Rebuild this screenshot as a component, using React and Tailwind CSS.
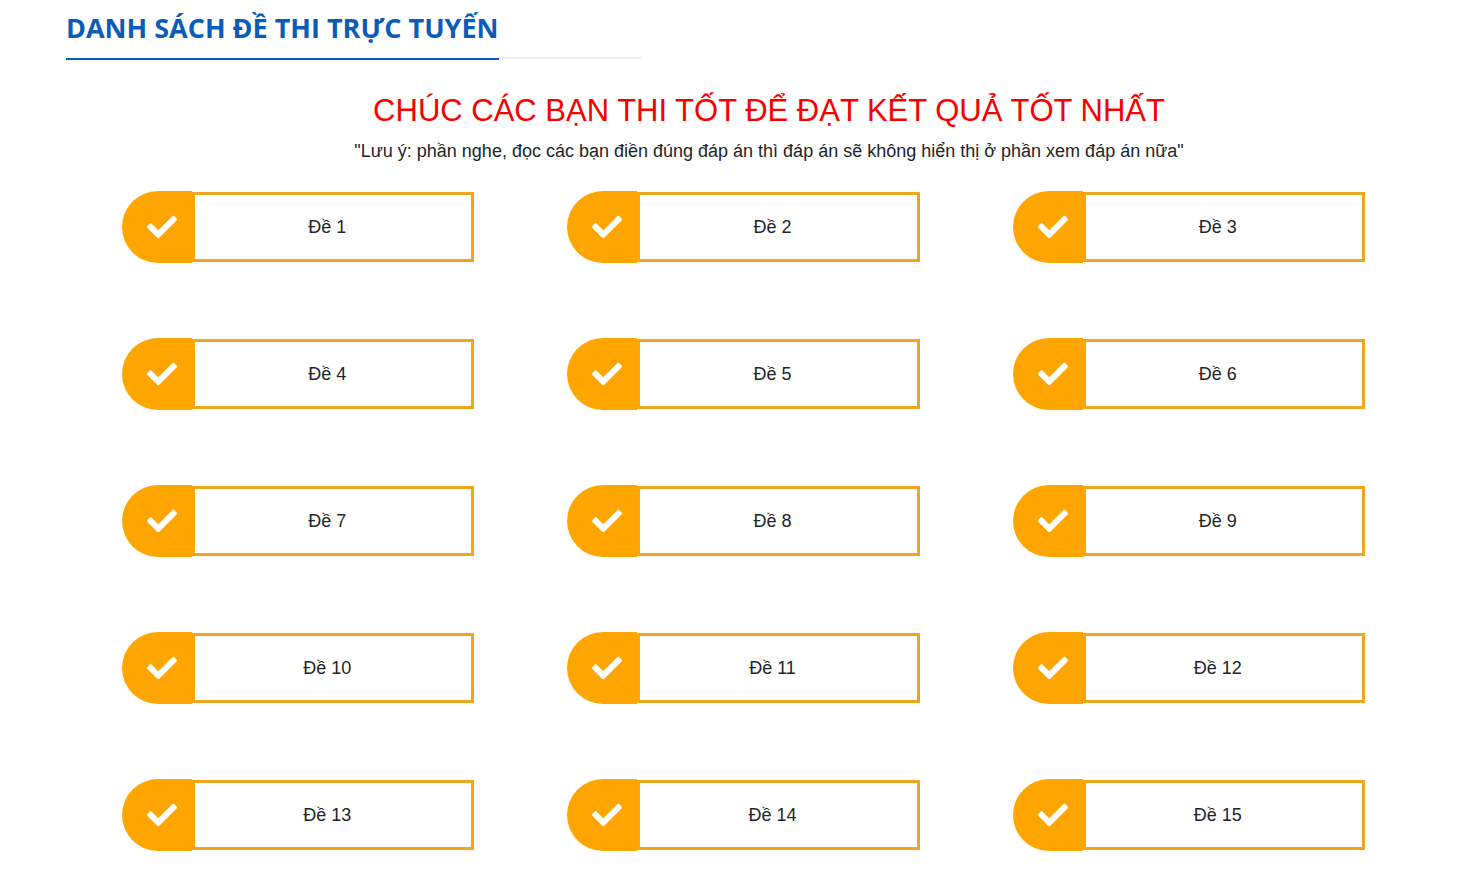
import React from "react";
import { FaCheck } from "react-icons/fa";

// Exam list
const exams = Array.from({ length: 15 }, (_, index) => ({
    id: index + 1,
    title: `Đề ${index + 1}`,
}));

const ExamCard = ({ exam }) => {
    return (
        <a href={`#de-${exam.id}`} className="mr-[72px] ml-[21px] flex items-center">
            <span className="flex h-[72px] w-[70px] shrink-0 items-center justify-center rounded-l-full bg-[#ffa500] pl-2.5">
                <FaCheck className="size-[30px] text-white" aria-hidden="true" />
            </span>
            <span className="flex h-[70px] flex-1 items-center justify-center border-3 border-[#f0a51e] border-l-[#ffa500] pr-3">
                {exam.title}
            </span>
        </a>
    );
};

const App = () => {
    return (
        <div className="bg-white pb-9 font-['Liberation_Sans',Arial,sans-serif] text-lg text-[#212529]">
            {/* Page title */}
            <div className="ml-[66px] flex w-[575px] items-end">
                <h1 className="border-b-2 border-[#0a5cb8] pt-2 pb-2.5 font-['Open_Sans','Noto_Sans',sans-serif] text-[27px] leading-10 font-bold whitespace-nowrap text-[#0a5cb8]">
                    DANH SÁCH ĐỀ THI TRỰC TUYẾN
                </h1>
                <div className="mb-px h-0.5 flex-1 bg-[#ebebeb]"></div>
            </div>

            <div className="pr-[26px] pl-[101px]">
                {/* Greeting and note */}
                <div className="pt-[31px] text-center">
                    <h2 className="text-[31px] leading-10 text-[#f80000]">
                        CHÚC CÁC BẠN THI TỐT ĐỂ ĐẠT KẾT QUẢ TỐT NHẤT
                    </h2>
                    <p className="pt-1.5 leading-7">
                        "Lưu ý: phần nghe, đọc các bạn điền đúng đáp án thì đáp án sẽ không hiển thị ở phần xem đáp án nữa"
                    </p>
                </div>

                {/* Exams */}
                <div className="mt-[26px] grid grid-cols-3 gap-y-[75px]">
                    {exams.map((exam) => (
                        <ExamCard key={exam.id} exam={exam} />
                    ))}
                </div>
            </div>
        </div>
    );
};

export default App;
